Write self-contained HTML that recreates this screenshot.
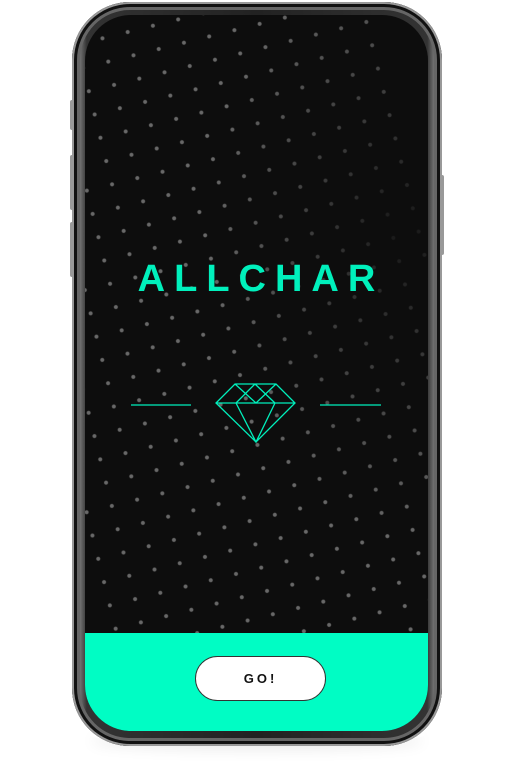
<!DOCTYPE html>
<html><head><style>
html,body{margin:0;padding:0;background:#fff;width:510px;height:772px;overflow:hidden;font-family:"Liberation Sans",sans-serif;position:relative}
.shadow{position:absolute;left:90px;top:726px;width:334px;height:18px;border-radius:50%;box-shadow:0 6px 14px rgba(0,0,0,.08)}
.phone{position:absolute;left:72px;top:2px;width:370px;height:744px;border-radius:58px;background:linear-gradient(90deg,#bbb,#333 4%,#222 50%,#333 96%,#bbb);box-shadow:inset 0 0 0 2px #999,inset 0 0 0 5px #111,inset 0 0 0 8px #666}
.btnside{position:absolute;background:#999;width:4px;border-radius:2px}
.screen{position:absolute;left:85px;top:15px;width:343px;height:716px;border-radius:46px;overflow:hidden;background:#0d0d0d}
.dots{position:absolute;left:-40px;top:-40px;width:423px;height:796px;background-image:radial-gradient(circle,#999 1.6px,transparent 2.4px);background-size:26px 24px;transform:rotate(-14deg);opacity:.65}
.fade{position:absolute;inset:0;background:radial-gradient(ellipse 200px 300px at 320px 220px,rgba(13,13,13,.9),rgba(13,13,13,0) 100%)}
.green{position:absolute;left:0;top:618px;width:343px;height:98px;background:#00fdc4}
.go{position:absolute;left:110px;top:23px;width:129px;height:43px;border:1px solid #333;border-radius:23px;background:#fff;text-align:center;line-height:43px;font-weight:bold;font-size:13px;letter-spacing:3px;color:#111}
.title{position:absolute;left:0;width:343px;top:243px;text-align:center;color:#00f0bc;font-weight:bold;font-size:38px;letter-spacing:9px;padding-left:9px;box-sizing:border-box}
</style></head><body>
<div class="shadow"></div>
<div class="phone"></div>
<div class="btnside" style="left:70px;top:100px;height:30px"></div>
<div class="btnside" style="left:70px;top:155px;height:55px"></div>
<div class="btnside" style="left:70px;top:222px;height:55px"></div>
<div class="btnside" style="left:440px;top:175px;height:80px"></div>
<div class="screen">
<div class="dots"></div><div class="fade"></div>
<div class="title">ALLCHAR</div>
<svg style="position:absolute;left:0;top:0" width="343" height="716" viewBox="85 15 343 716" fill="none" stroke="#00f0bc" stroke-width="1.3">
<line x1="131" y1="405" x2="191" y2="405"/><line x1="320" y1="405" x2="381" y2="405"/>
<path d="M235 384H276L295 403L256 442L216 403Z M216 403H295 M235 384L256 403L276 384 M255 384L236 403 M255 384L275 403 M236 403L256 442L275 403"/>
</svg>
<div class="green"><div class="go">GO!</div></div>
</div>
</body></html>
